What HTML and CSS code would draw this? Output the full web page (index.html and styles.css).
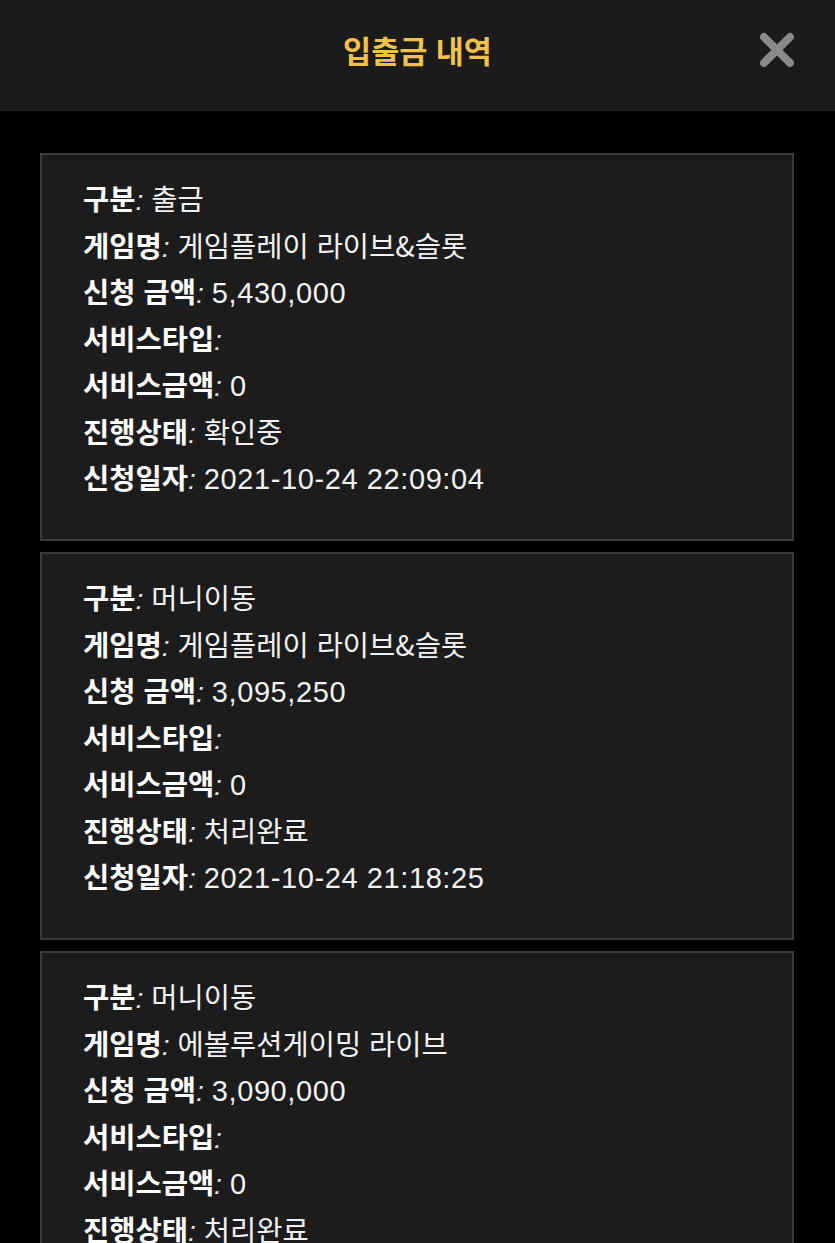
FILE: index.html
```html
<!DOCTYPE html>
<html lang="ko">
<head>
<meta charset="utf-8">
<link rel="stylesheet" href="styles.css">
</head>
<body>
<header class="topbar">
  <h1 class="title">입출금 내역</h1>
  <button class="close" aria-label="닫기">
    <svg width="36" height="36" viewBox="0 0 36 36"><path d="M5 5 L31 31 M31 5 L5 31" stroke="#8a8a8a" stroke-width="8" stroke-linecap="round"/></svg>
  </button>
</header>
<main class="list">
  <section class="card">
    <div class="row"><span class="label">구분</span><span class="colon">:</span> 출금</div>
    <div class="row"><span class="label">게임명</span><span class="colon">:</span> 게임플레이 라이브&amp;슬롯</div>
    <div class="row"><span class="label">신청 금액</span><span class="colon">:</span> <span class="num">5,430,000</span></div>
    <div class="row"><span class="label">서비스타입</span><span class="colon">:</span></div>
    <div class="row"><span class="label">서비스금액</span><span class="colon">:</span> <span class="num">0</span></div>
    <div class="row"><span class="label">진행상태</span><span class="colon">:</span> 확인중</div>
    <div class="row"><span class="label">신청일자</span><span class="colon">:</span> <span class="num">2021-10-24 22:09:04</span></div>
  </section>
  <section class="card">
    <div class="row"><span class="label">구분</span><span class="colon">:</span> 머니이동</div>
    <div class="row"><span class="label">게임명</span><span class="colon">:</span> 게임플레이 라이브&amp;슬롯</div>
    <div class="row"><span class="label">신청 금액</span><span class="colon">:</span> <span class="num">3,095,250</span></div>
    <div class="row"><span class="label">서비스타입</span><span class="colon">:</span></div>
    <div class="row"><span class="label">서비스금액</span><span class="colon">:</span> <span class="num">0</span></div>
    <div class="row"><span class="label">진행상태</span><span class="colon">:</span> 처리완료</div>
    <div class="row"><span class="label">신청일자</span><span class="colon">:</span> <span class="num">2021-10-24 21:18:25</span></div>
  </section>
  <section class="card">
    <div class="row"><span class="label">구분</span><span class="colon">:</span> 머니이동</div>
    <div class="row"><span class="label">게임명</span><span class="colon">:</span> 에볼루션게이밍 라이브</div>
    <div class="row"><span class="label">신청 금액</span><span class="colon">:</span> <span class="num">3,090,000</span></div>
    <div class="row"><span class="label">서비스타입</span><span class="colon">:</span></div>
    <div class="row"><span class="label">서비스금액</span><span class="colon">:</span> <span class="num">0</span></div>
    <div class="row"><span class="label">진행상태</span><span class="colon">:</span> 처리완료</div>
  </section>
</main>
</body>
</html>
```
FILE: styles.css
```css
* { box-sizing: border-box; }
html, body {
  margin: 0;
  padding: 0;
  background: #000;
  height: 1243px;
  overflow: hidden;
}
body {
  font-family: "Liberation Sans", "Noto Sans CJK KR", sans-serif;
  color: #f2f2f2;
}
.topbar {
  height: 111px;
  background: #1b1b1b;
  display: flex;
  align-items: center;
  justify-content: center;
  position: relative;
}
.title {
  margin: 0;
  padding-bottom: 12px;
  font-family: "Noto Sans CJK KR", sans-serif;
  font-size: 30.5px;
  font-weight: 700;
  color: #f1c24a;
}
.close {
  position: absolute;
  right: 40px;
  top: 32px;
  width: 36px;
  height: 36px;
  padding: 0;
  border: 0;
  background: transparent;
  display: flex;
}
.list {
  padding: 42px 41px 0 40px;
  display: flex;
  flex-direction: column;
  gap: 11px;
}
.card {
  height: 388px;
  background: #1c1c1c;
  border: 2px solid #3b3b3b;
  padding: 20px 0 0 41px;
  flex-shrink: 0;
}
.row {
  height: 46.5px;
  line-height: 46.5px;
  font-size: 28.5px;
  font-family: "Noto Sans CJK KR", sans-serif;
  white-space: nowrap;
}
.label {
  font-weight: 700;
  color: #fff;
}
.colon {
  font-family: "Liberation Sans", sans-serif;
  font-style: italic;
  color: #e8e8e8;
  margin-left: 0;
}
.num {
  font-family: "Liberation Sans", sans-serif;
  font-size: 29px;
  letter-spacing: 0.6px;
}
```
